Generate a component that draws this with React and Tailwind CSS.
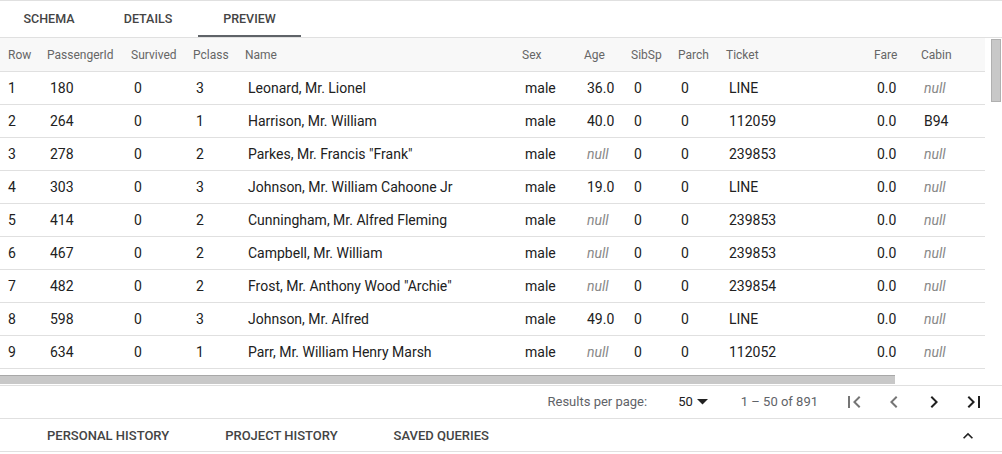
import { useState } from "react";

const columns = [
  { key: "row", label: "Row", w: "w-[39px]" },
  { key: "pid", label: "PassengerId", w: "w-[84px]" },
  { key: "survived", label: "Survived", w: "w-[62px]" },
  { key: "pclass", label: "Pclass", w: "w-[52px]" },
  { key: "name", label: "Name", w: "w-[277px]" },
  { key: "sex", label: "Sex", w: "w-[62px]" },
  { key: "age", label: "Age", w: "w-[47px]" },
  { key: "sibsp", label: "SibSp", w: "w-[47px]" },
  { key: "parch", label: "Parch", w: "w-[48px]" },
  { key: "ticket", label: "Ticket", w: "w-[148px]" },
  { key: "fare", label: "Fare", w: "w-[47px]" },
  { key: "cabin", label: "Cabin", w: "w-[72px]" },
];

const rows = [
  [1, 180, 0, 3, "Leonard, Mr. Lionel", "male", "36.0", 0, 0, "LINE", "0.0", null],
  [2, 264, 0, 1, "Harrison, Mr. William", "male", "40.0", 0, 0, "112059", "0.0", "B94"],
  [3, 278, 0, 2, 'Parkes, Mr. Francis "Frank"', "male", null, 0, 0, "239853", "0.0", null],
  [4, 303, 0, 3, "Johnson, Mr. William Cahoone Jr", "male", "19.0", 0, 0, "LINE", "0.0", null],
  [5, 414, 0, 2, "Cunningham, Mr. Alfred Fleming", "male", null, 0, 0, "239853", "0.0", null],
  [6, 467, 0, 2, "Campbell, Mr. William", "male", null, 0, 0, "239853", "0.0", null],
  [7, 482, 0, 2, 'Frost, Mr. Anthony Wood "Archie"', "male", null, 0, 0, "239854", "0.0", null],
  [8, 598, 0, 3, "Johnson, Mr. Alfred", "male", "49.0", 0, 0, "LINE", "0.0", null],
  [9, 634, 0, 1, "Parr, Mr. William Henry Marsh", "male", null, 0, 0, "112052", "0.0", null],
];

const Icon = ({ d, className = "" }) => (
  <svg viewBox="0 0 24 24" className={className} fill="currentColor">
    <path d={d} />
  </svg>
);

export default function App() {
  const [tab, setTab] = useState("PREVIEW");

  return (
    <div
      className="w-[1002px] h-[454px] overflow-hidden bg-white text-[#212121]"
      style={{ fontFamily: "Roboto, 'Noto Sans', sans-serif" }}
    >
      {/* Top tabs */}
      <div className="flex h-[38px] border-t border-b border-[#e0e0e0]">
        {[
          ["SCHEMA", "w-[98px]"],
          ["DETAILS", "w-[100px]"],
          ["PREVIEW", "w-[103px]"],
        ].map(([t, w]) => (
          <button
            key={t}
            onClick={() => setTab(t)}
            className={`${w} relative flex items-center justify-center text-[12.5px] font-medium text-[#444]`}
          >
            {t}
            {tab === t && (
              <span className="absolute left-0 right-0 bottom-0 h-[2px] bg-[#5f6368]" />
            )}
          </button>
        ))}
      </div>

      {/* Table + vertical scrollbar */}
      <div className="flex h-[337px]">
        <div className="w-[986px] overflow-hidden">
          <div className="w-[985px]">
            <div className="flex h-[34px] items-center bg-[#f8f8f8] border-b border-[#e0e0e0] text-[12px] text-[#666]">
              {columns.map((c) => (
                <div key={c.key} className={`${c.w} shrink-0 pl-2 whitespace-nowrap`}>
                  {c.label}
                </div>
              ))}
            </div>
            {rows.map((r) => (
              <div
                key={r[0]}
                className="flex h-[33px] items-center border-b border-[#e0e0e0] text-[14px]"
              >
                {r.map((v, i) => (
                  <div
                    key={columns[i].key}
                    className={`${columns[i].w} shrink-0 whitespace-nowrap ${
                      i === 0 ? "pl-2" : "pl-[11px]"
                    }`}
                  >
                    {v === null ? (
                      <span className="italic text-[#888]">null</span>
                    ) : (
                      v
                    )}
                  </div>
                ))}
              </div>
            ))}
          </div>
        </div>
        <div className="w-[16px] pt-px pl-[5px]">
          <div className="w-[10px] h-[63px] bg-[#c8c8c8] border border-[#b0b0b0]" />
        </div>
      </div>

      {/* Horizontal scrollbar */}
      <div className="h-[10px]">
        <div className="w-[895px] h-[9px] bg-[#c8c8c8] border-t border-[#a8a8a8]" />
      </div>

      {/* Pagination */}
      <div className="flex h-[34px] items-center justify-end pr-2 border-t border-b border-[#e0e0e0] text-[13px]">
        <span className="text-[#5f6368]">Results per page:</span>
        <span className="ml-[31px] flex items-center text-[#212121]">
          50
          <svg viewBox="7 10 10 5" className="ml-[4px] w-[11px] h-[5.5px]" fill="#212121">
            <path d="M7 10l5 5 5-5z" />
          </svg>
        </span>
        <span className="ml-[33px] text-[#5f6368]">1 – 50 of 891</span>
        <div className="ml-4 flex">
          <button className="w-10 h-8 flex items-center justify-center text-[#757575]">
            <Icon className="w-6 h-6" d="M18.41 16.59L13.82 12l4.59-4.59L17 6l-6 6 6 6zM6 6h2v12H6z" />
          </button>
          <button className="w-10 h-8 flex items-center justify-center text-[#757575]">
            <Icon className="w-6 h-6" d="M15.41 7.41L14 6l-6 6 6 6 1.41-1.41L10.83 12z" />
          </button>
          <button className="w-10 h-8 flex items-center justify-center text-[#212121]">
            <Icon className="w-6 h-6" d="M10 6L8.59 7.41 13.17 12l-4.58 4.59L10 18l6-6z" />
          </button>
          <button className="w-10 h-8 flex items-center justify-center text-[#212121]">
            <Icon className="w-6 h-6" d="M5.59 7.41L10.18 12l-4.59 4.59L7 18l6-6-6-6zM16 6h2v12h-2z" />
          </button>
        </div>
      </div>

      {/* Bottom tabs */}
      <div className="flex h-[33px] items-center pt-[2px] border-b border-[#e0e0e0]">
        <div className="flex ml-[19px]">
          {["PERSONAL HISTORY", "PROJECT HISTORY", "SAVED QUERIES"].map((t) => (
            <button key={t} className="px-7 text-[13px] font-medium text-[#444]">
              {t}
            </button>
          ))}
        </div>
        <button className="ml-auto mr-[24px] text-[#212121]">
          <Icon className="w-5 h-5" d="M12 8l-6 6 1.41 1.41L12 10.83l4.59 4.58L18 14z" />
        </button>
      </div>
    </div>
  );
}
